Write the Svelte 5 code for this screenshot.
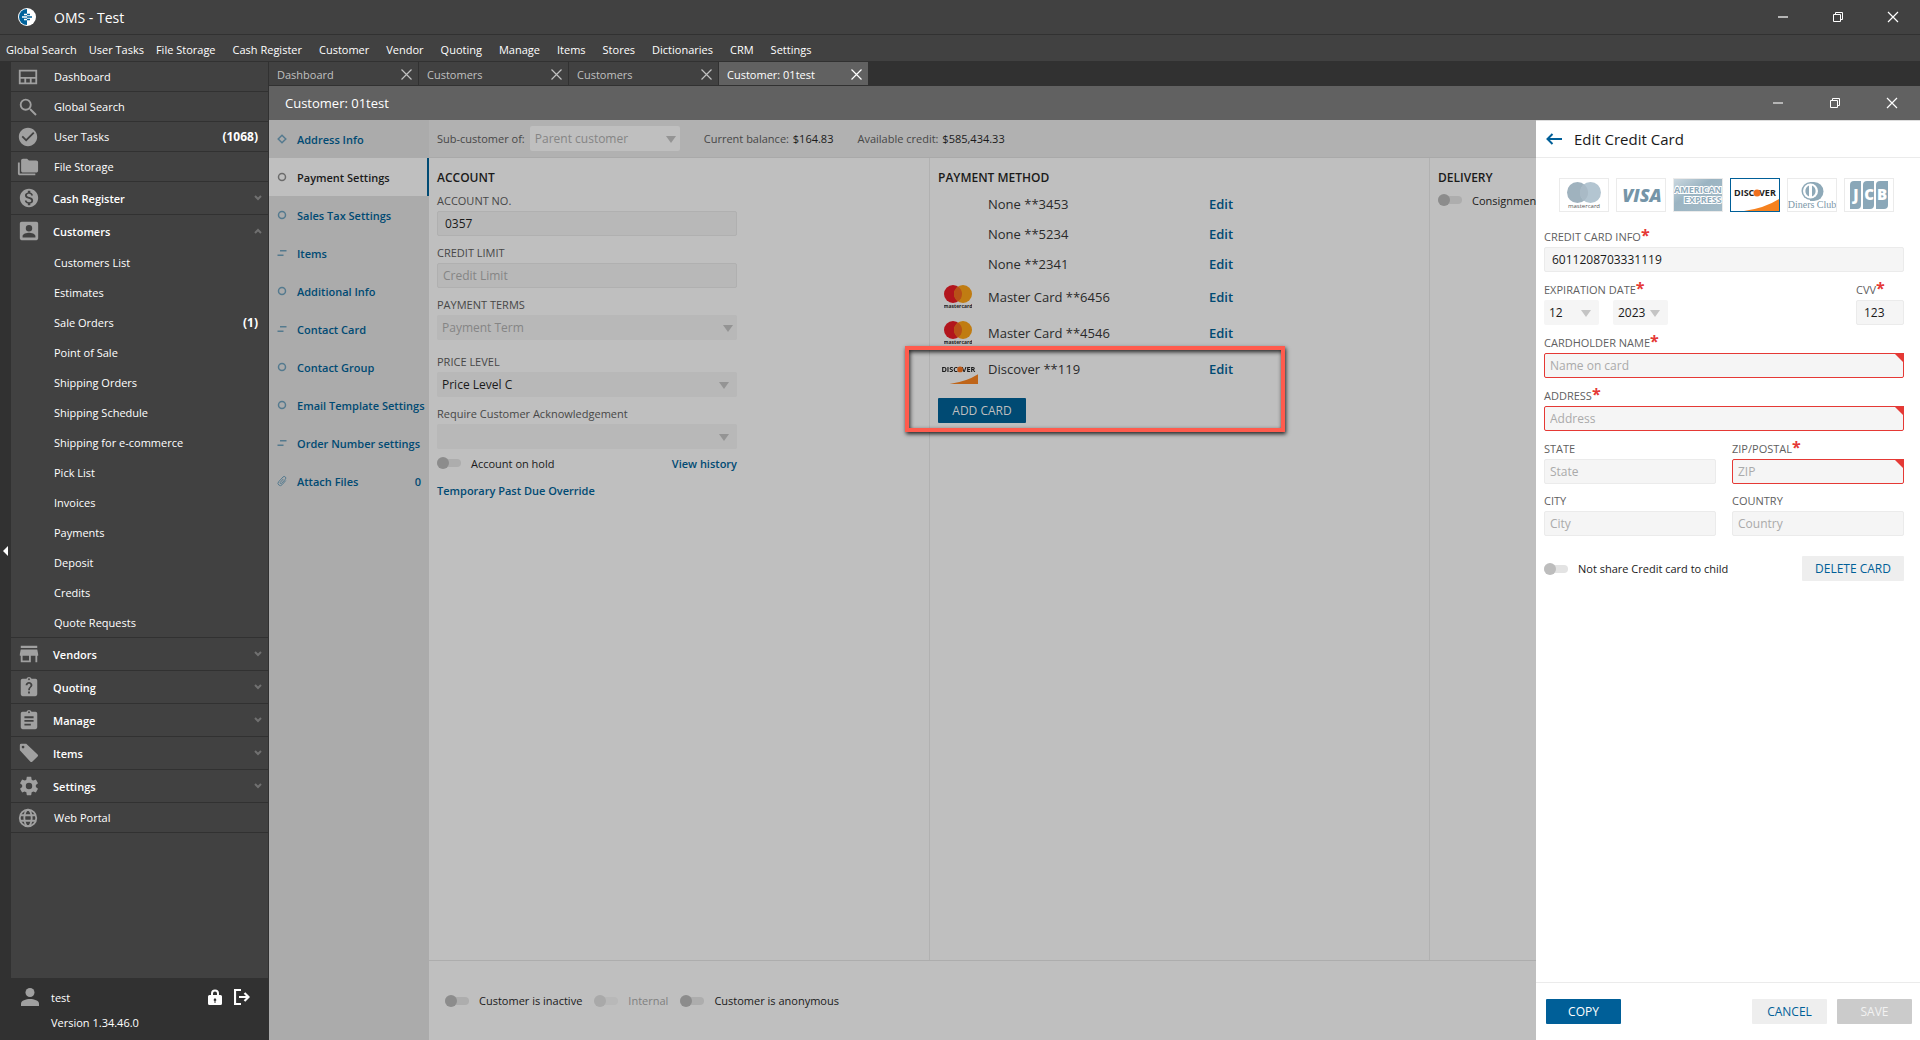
<script lang="ts">
	type NavItem = { label: string; icon: string; group?: boolean; open?: boolean; count?: string; children?: { label: string; count?: string }[] };

	const menu = ['Global Search', 'User Tasks', 'File Storage', 'Cash Register', 'Customer', 'Vendor', 'Quoting', 'Manage', 'Items', 'Stores', 'Dictionaries', 'CRM', 'Settings'];

	const nav: NavItem[] = [
		{ label: 'Dashboard', icon: 'dashboard' },
		{ label: 'Global Search', icon: 'search' },
		{ label: 'User Tasks', icon: 'check', count: '(1068)' },
		{ label: 'File Storage', icon: 'folders' },
		{ label: 'Cash Register', icon: 'dollar', group: true },
		{
			label: 'Customers',
			icon: 'contact',
			group: true,
			open: true,
			children: [
				{ label: 'Customers List' },
				{ label: 'Estimates' },
				{ label: 'Sale Orders', count: '(1)' },
				{ label: 'Point of Sale' },
				{ label: 'Shipping Orders' },
				{ label: 'Shipping Schedule' },
				{ label: 'Shipping for e-commerce' },
				{ label: 'Pick List' },
				{ label: 'Invoices' },
				{ label: 'Payments' },
				{ label: 'Deposit' },
				{ label: 'Credits' },
				{ label: 'Quote Requests' }
			]
		},
		{ label: 'Vendors', icon: 'store', group: true },
		{ label: 'Quoting', icon: 'question', group: true },
		{ label: 'Manage', icon: 'clipboard', group: true },
		{ label: 'Items', icon: 'tag', group: true },
		{ label: 'Settings', icon: 'gear', group: true },
		{ label: 'Web Portal', icon: 'globe' }
	];

	const icons: Record<string, string> = {
		dashboard: 'M2 4h20v16H2zM4 6v6h16V6zM4 14v4h4v-4zM10 14v4h4v-4zM16 14v4h4v-4z',
		search: 'M15.5 14h-.79l-.28-.27A6.47 6.47 0 0 0 16 9.5 6.5 6.5 0 1 0 9.5 16c1.61 0 3.09-.59 4.23-1.57l.27.28v.79l6 5.99L21.49 20zm-6 0C7 14 5 12 5 9.500S7 5 9.500 5 14 7 14 9.500 12 14 9.500 14z',
		check: 'M12 2C6.480 2 2 6.480 2 12s4.480 10 10 10 10-4.480 10-10S17.520 2 12 2zm-2 15l-5-5 1.410-1.410L10 14.170l7.590-7.590L19 8z',
		folders: 'M21 5h-8l-2-2H6.500C5.400 3 4.500 3.900 4.500 5v11c0 1.100.9 2 2 2H21c1.100 0 2-.9 2-2V7c0-1.100-.9-2-2-2zM3 7H1v12c0 1.100.9 2 2 2h17v-2H3z',
		dollar: 'M12 2C6.480 2 2 6.480 2 12s4.480 10 10 10 10-4.480 10-10S17.520 2 12 2zm1.410 16.090V20h-2.670v-1.930c-1.710-.36-3.160-1.460-3.270-3.400h1.960c.1 1.050.82 1.870 2.650 1.870 1.960 0 2.400-.98 2.400-1.590 0-.83-.44-1.610-2.670-2.140-2.480-.6-4.180-1.620-4.180-3.670 0-1.720 1.390-2.840 3.110-3.210V4h2.670v1.950c1.860.45 2.790 1.860 2.850 3.390H14.300c-.05-1.110-.64-1.870-2.220-1.870-1.500 0-2.400.68-2.400 1.640 0 .84.65 1.390 2.670 1.910s4.180 1.390 4.180 3.910c-.01 1.830-1.380 2.830-3.120 3.160z',
		contact: 'M2 4v16c0 1.100.89 2 2 2h16c1.100 0 2-.9 2-2V4c0-1.100-.9-2-2-2H4c-1.110 0-2 .9-2 2zm13.500 5a3.500 3.500 0 1 1-7 0 3.500 3.500 0 0 1 7 0zM5 17.500c0-2.300 4.500-3.600 7-3.600s7 1.300 7 3.600V19H5z',
		store: 'M21 3H3v2.500h18zm1 11v-2l-1-5H3l-1 5v2h1v7h11v-7h5v7h2v-7zm-10 5H5v-5h7z',
		question: 'M19 3h-4.200a3 3 0 0 0-5.600 0H5a2 2 0 0 0-2 2v15a2 2 0 0 0 2 2h14a2 2 0 0 0 2-2V5a2 2 0 0 0-2-2zm-7-.5a1 1 0 1 1 0 2 1 1 0 0 1 0-2zm1 16.500h-2v-2h2zm2-7.200c-1.200 1.200-2 1.700-2 3.700h-2c0-3 2.700-3.800 2.700-5.500 0-.9-.7-1.500-1.700-1.500s-1.700.7-1.700 1.700H8.300C8.300 8 10 6.500 12 6.500S15.700 8 15.700 9.900c0 .8-.2 1.400-.7 1.900z',
		clipboard: 'M19 3h-4.200a3 3 0 0 0-5.600 0H5a2 2 0 0 0-2 2v15a2 2 0 0 0 2 2h14a2 2 0 0 0 2-2V5a2 2 0 0 0-2-2zm-7-.5a1 1 0 1 1 0 2 1 1 0 0 1 0-2zM14 18H7v-2h7zm3-4H7v-2h10zm0-4H7V8h10z',
		tag: 'M2 3.500Q2 2 3.500 2H9L21.400 13.500Q22.500 14.700 21.400 15.800L15.800 21.400Q14.500 22.500 13.300 21.400L2 9zM5.500 4a1.500 1.500 0 1 0 0 3 1.500 1.500 0 0 0 0-3z',
		gear: 'M19.430 12.980c.04-.32.07-.64.07-.98s-.03-.66-.07-.98l2.110-1.650c.19-.15.24-.42.12-.64l-2-3.460c-.12-.22-.39-.3-.61-.22l-2.490 1c-.52-.4-1.080-.73-1.690-.98l-.38-2.650C14.460 2.180 14.250 2 14 2h-4c-.25 0-.46.18-.49.42l-.38 2.650c-.61.25-1.170.59-1.690.98l-2.490-1c-.23-.09-.49 0-.61.22l-2 3.460c-.13.22-.07.49.12.64l2.110 1.650c-.04.32-.07.65-.07.98s.03.66.07.98l-2.110 1.650c-.19.15-.24.42-.12.64l2 3.460c.12.22.39.3.61.22l2.490-1c.52.4 1.080.73 1.690.98l.38 2.650c.03.24.24.42.49.42h4c.25 0 .46-.18.49-.42l.38-2.650c.61-.25 1.170-.59 1.690-.98l2.490 1c.23.09.49 0 .61-.22l2-3.460c.12-.22.07-.49-.12-.64zM12 15.500a3.500 3.500 0 1 1 0-7 3.500 3.500 0 0 1 0 7z'
	};

	const tabs = ['Dashboard', 'Customers', 'Customers', 'Customer: 01test'];

	const sections = [
		{ label: 'Address Info', mark: 'diamond' },
		{ label: 'Payment Settings', mark: 'ring' },
		{ label: 'Sales Tax Settings', mark: 'ring' },
		{ label: 'Items', mark: 'lines' },
		{ label: 'Additional Info', mark: 'ring' },
		{ label: 'Contact Card', mark: 'lines' },
		{ label: 'Contact Group', mark: 'ring' },
		{ label: 'Email Template Settings', mark: 'ring' },
		{ label: 'Order Number settings', mark: 'lines' },
		{ label: 'Attach Files', mark: 'clip', count: '0' }
	];

	const cards = [
		{ label: 'None **3453', brand: '' },
		{ label: 'None **5234', brand: '' },
		{ label: 'None **2341', brand: '' },
		{ label: 'Master Card **6456', brand: 'mastercard' },
		{ label: 'Master Card **4546', brand: 'mastercard' }
	];

	const brands = ['mastercard', 'visa', 'amex', 'discover', 'diners', 'jcb'];

	let activeTab = $state(3);
	let activeSection = $state('Payment Settings');
	let activeBrand = $state('discover');
	let cardNumber = $state('6011208703331119');
	let cvv = $state('123');
	let accountNo = $state('0357');
</script>

{#snippet windowButtons()}
	<div class="window-buttons">
		<button aria-label="Minimize"><svg width="12" height="12" viewBox="0 0 12 12"><path d="M1 6h10" stroke="#b5b5b5" stroke-width="2" /></svg></button>
		<button aria-label="Restore"><svg width="12" height="12" viewBox="0 0 12 12"><path d="M1.500 3.500h7v7h-7zM3.500 3V1.500h7v7H9" fill="none" stroke="#fff" /></svg></button>
		<button aria-label="Close"><svg width="12" height="12" viewBox="0 0 12 12"><path d="M1 1l10 10M11 1L1 11" stroke="#fff" stroke-width="1.200" /></svg></button>
	</div>
{/snippet}

{#snippet discoverLogo()}
	<svg width="48" height="32" viewBox="0 0 48 32" aria-hidden="true">
		<path d="M13 32Q34 29 48 20V32z" fill="#f58220" />
		<text x="3" y="17" font-size="9" font-weight="700" fill="#222">DISC</text>
		<text x="28" y="17" font-size="9" font-weight="700" fill="#222">VER</text>
		<circle cx="26" cy="14" r="3.500" fill="#f0701e" />
	</svg>
{/snippet}

<div class="app">
	<header class="title-bar">
		<svg class="logo" width="18" height="18" viewBox="0 0 18 18" aria-hidden="true">
			<circle cx="9" cy="9" r="9" fill="#fff" />
			<path d="M9 1a8 8 0 0 0 0 16z" fill="#00629b" />
			<path d="M6 6.500h3M4 9h5M6 11.500h3" stroke="#fff" stroke-width="1.300" />
			<path d="M9 6.500h3M9 9h5M9 11.500h3" stroke="#00629b" stroke-width="1.300" />
		</svg>
		<span class="app-name">OMS - Test</span>
		{@render windowButtons()}
	</header>

	<nav class="menu-bar">
		{#each menu as item}
			<button>{item}</button>
		{/each}
	</nav>

	<div class="workspace">
		<button class="collapse" aria-label="Collapse sidebar">
			<svg width="5" height="10" viewBox="0 0 5 10"><path d="M5 0v10L0 5z" fill="#fff" /></svg>
		</button>

		<aside class="sidebar">
			<nav class="side-nav">
				{#each nav as item}
					<button class="nav-row" class:group={item.group} class:open={item.open}>
						<svg class="nav-icon" width="22" height="22" viewBox="0 0 24 24" aria-hidden="true">
							{#if item.icon === 'globe'}
								<g fill="none" stroke="#a0a0a0" stroke-width="2">
									<circle cx="12" cy="12" r="9" />
									<ellipse cx="12" cy="12" rx="4" ry="9" />
									<path d="M4 9h16M4 15h16" />
								</g>
							{:else}
								<path d={icons[item.icon]} fill="#a0a0a0" fill-rule="evenodd" />
							{/if}
						</svg>
						<span class="nav-label">{item.label}</span>
						{#if item.count}<b class="nav-count">{item.count}</b>{/if}
						{#if item.group}
							<svg class="chevron" width="8" height="6" viewBox="0 0 8 6" aria-hidden="true">
								<path d={item.open ? 'M1 5l3-3 3 3' : 'M1 1l3 3 3-3'} fill="none" stroke="#707070" stroke-width="2" />
							</svg>
						{/if}
					</button>
					{#if item.children}
						<div class="nav-children">
							{#each item.children as child}
								<button class="child-row">
									<span class="nav-label">{child.label}</span>
									{#if child.count}<b class="nav-count">{child.count}</b>{/if}
								</button>
							{/each}
						</div>
					{/if}
				{/each}
			</nav>
			<div class="user-box">
				<div class="user-row">
					<svg width="18" height="18" viewBox="0 0 18 18" aria-hidden="true"><circle cx="9" cy="4.500" r="4.500" fill="#a0a0a0" /><path d="M0 18v-2.500C0 12.500 5 11 9 11s9 1.500 9 4.500V18z" fill="#a0a0a0" /></svg>
					<span class="user-name">test</span>
					<button aria-label="Lock">
						<svg width="14" height="16" viewBox="0 0 14 16"><path d="M1.500 6H3V4.500a4 4 0 0 1 8 0V6h1.500A1.500 1.500 0 0 1 14 7.500v7a1.500 1.500 0 0 1-1.500 1.500h-11A1.500 1.500 0 0 1 0 14.500v-7A1.500 1.500 0 0 1 1.500 6zM5 6h4V4.500a2 2 0 0 0-4 0zm1.500 6v2h1v-2a1.300 1.300 0 1 0-1 0z" fill="#fff" fill-rule="evenodd" /></svg>
					</button>
					<button aria-label="Log out">
						<svg width="16" height="16" viewBox="0 0 16 16"><path d="M7 1H1v14h6M5 8h9M10.500 4l4 4-4 4" fill="none" stroke="#fff" stroke-width="2.200" /></svg>
					</button>
				</div>
				<div class="version">Version 1.34.46.0</div>
			</div>
		</aside>

		<main class="main">
			<div class="tabs">
				{#each tabs as tab, i}
					<div class="tab" class:active={activeTab === i}>
						<button class="tab-name" onclick={() => (activeTab = i)}>{tab}</button>
						<button class="tab-close" aria-label="Close {tab}">
							<svg width="11" height="11" viewBox="0 0 11 11"><path d="M.5.5l10 10M10.500.5l-10 10" stroke="currentColor" stroke-width="1.200" /></svg>
						</button>
					</div>
				{/each}
			</div>

			<div class="window-head">
				<h1>Customer: 01test</h1>
				{@render windowButtons()}
			</div>

			<div class="window-body">
				<nav class="section-nav">
					{#each sections as section}
						<button class="section" class:active={activeSection === section.label} onclick={() => (activeSection = section.label)}>
							<svg width="10" height="12" viewBox="0 0 10 12" fill="none" stroke="currentColor" stroke-width="1.500" aria-hidden="true">
								{#if section.mark === 'diamond'}
									<path d="M5 2.200L8.800 6 5 9.800 1.200 6z" />
								{:else if section.mark === 'ring'}
									<circle cx="5" cy="6" r="3.500" />
								{:else if section.mark === 'lines'}
									<path d="M3 3.800h6.500M.5 8.200h6" />
								{:else}
									<path d="M8.800 5.500L5 9.800A2.200 2.200 0 0 1 1.600 6.800L6 2A1.600 1.600 0 0 1 8.400 4.200L4.500 8.400A.8.8 0 0 1 3.300 7.300L6.300 4" stroke-width="1" />
								{/if}
							</svg>
							<span>{section.label}</span>
							{#if section.count}<span class="section-count">{section.count}</span>{/if}
						</button>
					{/each}
				</nav>

				<div class="content">
					<div class="summary">
						<label for="parent">Sub-customer of:</label>
						<div class="select light unset">
							<select id="parent"><option>Parent customer</option></select>
						</div>
						<span class="amount">Current balance: <b>$164.83</b></span>
						<span class="amount">Available credit: <b>$585,434.33</b></span>
					</div>

					<div class="columns">
						<section class="column">
							<h2>ACCOUNT</h2>
							<div class="account-form">
								<div class="field">
									<label for="account-no">ACCOUNT NO.</label>
									<input id="account-no" type="text" bind:value={accountNo} />
								</div>
								<div class="field">
									<label for="credit-limit">CREDIT LIMIT</label>
									<input id="credit-limit" type="text" placeholder="Credit Limit" />
								</div>
								<div class="field spaced">
									<label for="terms">PAYMENT TERMS</label>
									<div class="select unset"><select id="terms"><option>Payment Term</option></select></div>
								</div>
								<div class="field">
									<label for="price-level">PRICE LEVEL</label>
									<div class="select"><select id="price-level"><option>Price Level C</option></select></div>
								</div>
								<div class="field">
									<label for="ack">Require Customer Acknowledgement</label>
									<div class="select"><select id="ack"><option value=""></option></select></div>
								</div>
								<div class="hold-row">
									<label class="toggle"><input type="checkbox" />Account on hold</label>
									<a href="#history">View history</a>
								</div>
								<a class="override" href="#override">Temporary Past Due Override</a>
							</div>
						</section>

						<section class="column">
							<h2>PAYMENT METHOD</h2>
							<div class="card-list">
								{#each cards as card}
									<div class="card-row" class:tall={card.brand}>
										<div class="card-logo">
											{#if card.brand}
												<svg width="28" height="24" viewBox="0 0 28 24" aria-hidden="true">
													<circle cx="9" cy="9" r="9" fill="#b2151d" />
													<circle cx="19" cy="9" r="9" fill="#c07c12" />
													<path d="M14 1.500a9 9 0 0 1 0 15 9 9 0 0 1 0-15z" fill="#b85018" />
													<text x="14" y="23" text-anchor="middle" font-size="5" font-weight="700" fill="#222">mastercard</text>
												</svg>
											{/if}
										</div>
										<span class="card-name">{card.label}</span>
										<a href="#edit">Edit</a>
									</div>
								{/each}
								<div class="highlighted">
									<div class="card-row tall">
										<div class="card-logo discover">{@render discoverLogo()}</div>
										<span class="card-name">Discover **119</span>
										<a href="#edit">Edit</a>
									</div>
									<button class="btn dim-primary">ADD CARD</button>
									<div class="highlight"></div>
								</div>
							</div>
						</section>

						<section class="column">
							<h2>DELIVERY</h2>
							<label class="toggle"><input type="checkbox" />Consignment</label>
						</section>
					</div>

					<footer class="status">
						<label class="toggle"><input type="checkbox" />Customer is inactive</label>
						<label class="toggle off"><input type="checkbox" disabled />Internal</label>
						<label class="toggle"><input type="checkbox" />Customer is anonymous</label>
					</footer>
				</div>

				<form class="panel">
					<div class="panel-head">
						<button type="button" class="back" aria-label="Back">
							<svg width="16" height="12" viewBox="0 0 16 12"><path d="M16 6H2M6.500 1L1.500 6l5 5" fill="none" stroke="#005f98" stroke-width="2" /></svg>
						</button>
						<h2>Edit Credit Card</h2>
					</div>

					<div class="panel-body">
						<div class="brands">
							{#each brands as brand}
								<button type="button" class="brand" class:selected={activeBrand === brand} aria-label={brand} onclick={() => (activeBrand = brand)}>
									{#if brand === 'discover'}
										{@render discoverLogo()}
									{:else}
										<svg width="48" height="32" viewBox="0 0 48 32" aria-hidden="true">
											{#if brand === 'mastercard'}
												<circle cx="17.500" cy="13.500" r="10.500" fill="#9fb2be" />
												<circle cx="30.500" cy="13.500" r="10.500" fill="#b3c5d1" />
												<path d="M24 5.200a10.500 10.500 0 0 1 0 16.600 10.500 10.500 0 0 1 0-16.600z" fill="#a9bac6" />
												<text x="24" y="29" text-anchor="middle" font-size="6" fill="#555">mastercard</text>
											{:else if brand === 'visa'}
												<text x="25" y="23" text-anchor="middle" font-size="18" font-weight="800" font-style="italic" fill="#7595a8">VISA</text>
											{:else if brand === 'amex'}
												<defs>
													<linearGradient id="amex" x1="0" y1="0" x2="1" y2="1">
														<stop offset="0" stop-color="#cbd8e0" />
														<stop offset=".4" stop-color="#9bb4c2" />
														<stop offset="1" stop-color="#a5bcc8" />
													</linearGradient>
												</defs>
												<rect width="48" height="32" fill="url(#amex)" />
												<g font-size="9" font-weight="700" fill="#8fabbb" stroke="#fff" stroke-width="2" paint-order="stroke">
													<text x="0" y="14">AMERICAN</text>
													<text x="10" y="24">EXPRESS</text>
												</g>
											{:else if brand === 'diners'}
												<path d="M22 3h4a9.500 9.500 0 0 1 0 19h-4z" fill="#8ea9b8" />
												<circle cx="22.500" cy="12" r="9" fill="#8ea9b8" />
												<circle cx="22.500" cy="12" r="7.500" fill="#fff" />
												<path d="M21 6.500a6 6 0 0 0 0 11zM24 6.500a6 6 0 0 1 0 11z" fill="#8ea9b8" />
												<text class="serif" x="24" y="29" text-anchor="middle" font-size="10" fill="#7b98a8">Diners Club</text>
											{:else}
												<path d="M9 2h7v24a4 4 0 0 1-4 4H5V6a4 4 0 0 1 4-4z" fill="#8aa7b8" />
												<path d="M22 2h7v24a4 4 0 0 1-4 4h-7V6a4 4 0 0 1 4-4z" fill="#8aa7b8" />
												<path d="M35 2h8v24a4 4 0 0 1-4 4h-8V6a4 4 0 0 1 4-4z" fill="#8aa7b8" />
												<g font-size="15" font-weight="800" fill="#fff" text-anchor="middle">
													<text x="11" y="21">J</text>
													<text x="24" y="21">C</text>
													<text x="37" y="21">B</text>
												</g>
											{/if}
										</svg>
									{/if}
								</button>
							{/each}
						</div>

						<div class="field">
							<label for="card-number">CREDIT CARD INFO<i>*</i></label>
							<input id="card-number" type="text" bind:value={cardNumber} />
						</div>
						<div class="field-row">
							<div class="field">
								<label for="exp-month">EXPIRATION DATE<i>*</i></label>
								<div class="expiry">
									<div class="select"><select id="exp-month"><option>12</option></select></div>
									<div class="select"><select aria-label="Expiration year"><option>2023</option></select></div>
								</div>
							</div>
							<div class="field cvv">
								<label for="cvv">CVV<i>*</i></label>
								<input id="cvv" type="text" bind:value={cvv} />
							</div>
						</div>
						<div class="field invalid">
							<label for="holder">CARDHOLDER NAME<i>*</i></label>
							<div class="box"><input id="holder" type="text" placeholder="Name on card" /></div>
						</div>
						<div class="field invalid">
							<label for="address">ADDRESS<i>*</i></label>
							<div class="box"><input id="address" type="text" placeholder="Address" /></div>
						</div>
						<div class="pair">
							<div class="field">
								<label for="state">STATE</label>
								<input id="state" type="text" placeholder="State" />
							</div>
							<div class="field invalid">
								<label for="zip">ZIP/POSTAL<i>*</i></label>
								<div class="box"><input id="zip" type="text" placeholder="ZIP" /></div>
							</div>
							<div class="field">
								<label for="city">CITY</label>
								<input id="city" type="text" placeholder="City" />
							</div>
							<div class="field">
								<label for="country">COUNTRY</label>
								<input id="country" type="text" placeholder="Country" />
							</div>
						</div>
						<div class="share-row">
							<label class="toggle"><input type="checkbox" />Not share Credit card to child</label>
							<button type="button" class="btn delete">DELETE CARD</button>
						</div>
					</div>

					<div class="panel-foot">
						<button type="button" class="btn primary">COPY</button>
						<button type="button" class="btn">CANCEL</button>
						<button type="button" class="btn" disabled>SAVE</button>
					</div>
				</form>
			</div>
		</main>
	</div>
</div>

<style>
	:global(body) {
		background: #414141;
	}

	.app {
		--input-bg: #b8b8b8;
		--input-line: #b0b0b0;
		--link: #004a73;
		--label: #474747;
		--text: #1a1a1a;
		--hint: #858585;
		--track: #adadad;
		--knob: #8c8c8c;
		--arrow: #949494;
		display: flex;
		flex-direction: column;
		height: 100vh;
		overflow: hidden;
		font-family: 'Segoe UI', 'Open Sans', 'Noto Sans', sans-serif;
		font-size: 12px;
		color: #fff;
	}

	.app :global(*) {
		box-sizing: border-box;
	}

	button,
	input,
	select {
		font: inherit;
		color: inherit;
		margin: 0;
	}

	button {
		padding: 0;
		border: 0;
		background: none;
		cursor: pointer;
	}

	svg {
		display: block;
	}

	h1,
	h2 {
		margin: 0;
		font-weight: 400;
	}

	a {
		color: var(--link);
		font-weight: 600;
		text-decoration: none;
	}

	.title-bar {
		display: flex;
		align-items: center;
		height: 35px;
		padding-left: 18px;
		background: #414141;
		border-bottom: 1px solid #313131;
	}

	.app-name {
		margin-left: 18px;
		font-size: 14px;
	}

	.window-buttons {
		display: flex;
		margin-left: auto;
	}

	.window-buttons button {
		display: grid;
		place-items: center;
		width: 55px;
		height: 34px;
	}

	.menu-bar {
		display: flex;
		gap: 17px;
		height: 26px;
		padding: 4px 0 0 6px;
		background: #414141;
		font-size: 11px;
	}

	.menu-bar button {
		line-height: 22px;
	}

	.menu-bar button:nth-child(-n + 2) {
		margin-right: -5px;
	}

	.workspace {
		display: flex;
		flex: 1;
		min-height: 0;
		border-top: 1px solid #313131;
	}

	.collapse {
		display: flex;
		align-items: center;
		justify-content: center;
		width: 11px;
		background: #313131;
	}

	.sidebar {
		display: flex;
		flex-direction: column;
		width: 258px;
		border-right: 1px solid #313131;
		background: #414141;
		font-size: 11px;
	}

	.side-nav {
		flex: 1;
	}

	.nav-row {
		display: flex;
		align-items: center;
		width: 100%;
		height: 30px;
		padding: 0 10px 0 6px;
		border-bottom: 1px solid #313131;
		text-align: left;
	}

	.nav-row.group {
		height: 33px;
		padding: 0 6px 0 7px;
		font-weight: 600;
	}

	.nav-row.group.open {
		height: 32px;
		border-bottom: 0;
	}

	.nav-label {
		flex: 1;
		margin-left: 15px;
	}

	.nav-row.group .nav-label {
		margin-left: 13px;
	}

	.nav-count {
		font-size: 12px;
	}

	.nav-children {
		border-bottom: 1px solid #313131;
	}

	.child-row {
		display: flex;
		align-items: center;
		width: 100%;
		height: 30px;
		padding: 0 10px 0 28px;
		text-align: left;
	}

	.user-box {
		height: 62px;
		padding: 8px 18px 0 10px;
		background: #313131;
	}

	.user-row {
		display: flex;
		align-items: center;
		gap: 12px;
		height: 22px;
	}

	.user-name {
		flex: 1;
	}

	.version {
		padding-left: 30px;
		line-height: 30px;
	}

	.main {
		display: flex;
		flex-direction: column;
		flex: 1;
		min-width: 0;
	}

	.tabs {
		display: flex;
		gap: 1px;
		height: 24px;
		padding-bottom: 1px;
		background: #313131;
		font-size: 11px;
		color: #c0c0c0;
	}

	.tab {
		display: flex;
		align-items: center;
		width: 149px;
		padding: 1px 6px 0 8px;
		background: #414141;
	}

	.tab.active {
		background: #616161;
		color: #fff;
	}

	.tab-name {
		flex: 1;
		text-align: left;
	}

	.window-head {
		display: flex;
		align-items: center;
		height: 34px;
		padding-left: 16px;
		background: #616161;
	}

	.window-head h1 {
		font-size: 13px;
	}

	.window-head .window-buttons button {
		width: 57px;
	}

	.window-body {
		position: relative;
		display: flex;
		flex: 1;
		min-height: 0;
		background: #bfbfbf;
		color: var(--text);
	}

	.section-nav {
		width: 160px;
		background: #ababab;
		font-size: 11px;
	}

	.section {
		display: flex;
		align-items: center;
		gap: 10px;
		width: 100%;
		height: 38px;
		padding: 0 6px 0 8px;
		border-right: 2px solid transparent;
		color: var(--link);
		font-weight: 600;
		white-space: nowrap;
	}

	.section svg {
		flex: none;
		opacity: 0.5;
	}

	.section.active {
		background: #bfbfbf;
		border-right-color: var(--link);
		color: var(--text);
	}

	.section-count {
		margin-left: auto;
	}

	.content {
		display: flex;
		flex-direction: column;
		flex: 1;
		min-width: 0;
		overflow: hidden;
	}

	.summary {
		display: flex;
		align-items: center;
		height: 38px;
		padding-left: 8px;
		background: #b1b1b1;
		border-bottom: 1px solid #a9a9a9;
		color: var(--label);
		font-size: 11px;
	}

	.summary .select {
		width: 150px;
		margin-left: 5px;
	}

	.amount {
		margin-left: 24px;
	}

	.amount b {
		margin-left: 1px;
		color: var(--text);
		font-weight: 400;
	}

	.columns {
		display: flex;
		flex: 1;
	}

	.column {
		flex: 0 0 500px;
		padding: 7px 8px 0;
		border-right: 1px solid #b1b1b1;
	}

	.column:first-child {
		flex-basis: 501px;
	}

	.column h2 {
		font-size: 12px;
		font-weight: 600;
		line-height: 26px;
	}

	.account-form {
		width: 300px;
	}

	.field {
		margin-bottom: 7px;
	}

	.field.spaced {
		margin-bottom: 12px;
	}

	.field > label {
		display: block;
		height: 20px;
		line-height: 20px;
		font-size: 11px;
		color: var(--label);
	}

	.field i {
		color: #e53935;
		font-size: 16px;
		font-style: normal;
		font-weight: 700;
		line-height: 16px;
	}

	.field input {
		display: block;
		width: 100%;
		height: 25px;
		padding: 0 7px;
		border: 1px solid var(--input-line);
		border-radius: 2px;
		background: var(--input-bg);
		outline: none;
	}

	.field input::placeholder {
		color: var(--hint);
	}

	.field input:placeholder-shown {
		padding-left: 5px;
	}

	.select {
		position: relative;
	}

	.select::after {
		content: '';
		position: absolute;
		right: 8px;
		top: 10px;
		border: 5px solid transparent;
		border-top: 7px solid var(--arrow);
		border-bottom: 0;
		pointer-events: none;
	}

	.select select {
		display: block;
		appearance: none;
		width: 100%;
		height: 25px;
		padding: 0 5px;
		border: 0;
		border-radius: 2px;
		background: var(--input-bg);
	}

	.select.light select {
		background: #bfbfbf;
	}

	.select.unset select {
		color: var(--hint);
	}

	.select.unset::after {
		right: 4px;
	}

	.summary select {
		font-size: 12px;
	}

	.hold-row {
		display: flex;
		align-items: center;
		justify-content: space-between;
		height: 28px;
		margin-top: -7px;
	}

	.hold-row a,
	.override {
		font-size: 11px;
	}

	.override {
		line-height: 28px;
	}

	.toggle {
		display: inline-flex;
		align-items: center;
		gap: 10px;
		white-space: nowrap;
		font-size: 11px;
	}

	.toggle input {
		position: relative;
		appearance: none;
		width: 24px;
		height: 8px;
		border-radius: 4px;
		background: var(--track);
	}

	.toggle input::before {
		content: '';
		position: absolute;
		left: 0;
		top: -2px;
		width: 12px;
		height: 12px;
		border-radius: 50%;
		background: var(--knob);
	}

	.toggle.off {
		--track: #b8b8b8;
		--knob: #a9a9a9;
		color: #808080;
	}

	.card-list {
		margin-top: -2px;
	}

	.card-row {
		display: flex;
		align-items: center;
		height: 30px;
	}

	.card-row.tall {
		height: 36px;
	}

	.card-logo {
		display: flex;
		width: 50px;
		padding-left: 6px;
	}

	.card-logo.discover {
		padding: 4px 0 0 1px;
		filter: brightness(0.78);
	}

	.card-logo.discover :global(svg) {
		width: 39px;
		height: 26px;
	}

	.card-name {
		width: 221px;
		font-size: 13px;
		color: #2a2a2a;
	}

	.card-row a {
		font-size: 13px;
	}

	.highlighted {
		position: relative;
		padding-bottom: 9px;
	}

	.highlight {
		position: absolute;
		left: -33px;
		top: -5px;
		bottom: 0;
		width: 380px;
		border: 4px solid #ff5b4d;
		box-shadow: 1px 2px 4px #000000d0, inset 1px 2px 4px #000000d0;
		pointer-events: none;
	}

	.btn {
		width: 75px;
		height: 25px;
		border-radius: 1px;
		background: #eee;
		color: #005f98;
		font-size: 12px;
	}

	.dim-primary {
		display: block;
		width: 88px;
		margin-top: 11px;
		background: #004a73;
		color: #bfbfbf;
	}

	.primary {
		background: #005f98;
		color: #fff;
	}

	.btn:disabled {
		background: #cbcbcb;
		color: #f2f2f2;
	}

	.status {
		display: flex;
		align-items: center;
		gap: 12px;
		height: 80px;
		padding-left: 16px;
		border-top: 1px solid #adadad;
	}

	/* card editor, slides over the right edge of the window */
	.panel {
		--input-bg: #f5f5f5;
		--input-line: #ebebeb;
		--link: #005f98;
		--label: #5f5f5f;
		--hint: #aaa;
		--track: #e3e3e3;
		--knob: #bdbdbd;
		--arrow: #c4c4c4;
		position: absolute;
		top: 0;
		right: 0;
		bottom: 0;
		display: flex;
		flex-direction: column;
		width: 384px;
		border-top: 1px solid #ddd;
		background: #fff;
	}

	.panel-head {
		display: flex;
		align-items: center;
		height: 37px;
		padding-left: 10px;
		border-bottom: 1px solid #ebebeb;
	}

	.panel-head h2 {
		margin-left: 12px;
		font-size: 15px;
	}

	.panel-body {
		flex: 1;
		padding: 20px 16px 0 8px;
	}

	.brands {
		display: flex;
		gap: 7px;
		padding-left: 15px;
		margin-bottom: 14px;
	}

	.brand {
		width: 50px;
		height: 34px;
		border: 1px solid #ebebeb;
		overflow: hidden;
	}

	.brand.selected {
		border-color: #005f98;
	}

	.brand .serif {
		font-family: 'Liberation Serif', serif;
	}

	.panel .field > label {
		height: 21px;
		line-height: 21px;
	}

	.field-row {
		display: flex;
		justify-content: space-between;
	}

	.expiry {
		display: grid;
		grid-template-columns: 55px 55px;
		gap: 14px;
	}

	.cvv {
		width: 48px;
	}

	.box {
		position: relative;
	}

	.box::after {
		content: '';
		position: absolute;
		top: 0;
		right: 0;
		border-top: 10px solid #e53935;
		border-left: 10px solid transparent;
	}

	.panel .invalid input {
		border-color: #e53935;
	}

	.pair {
		display: grid;
		grid-template-columns: 1fr 1fr;
		column-gap: 16px;
	}

	.pair .field {
		margin-bottom: 6px;
	}

	.share-row {
		display: flex;
		align-items: center;
		justify-content: space-between;
		margin-top: 14px;
	}

	.delete {
		width: 102px;
	}

	.panel-foot {
		display: flex;
		gap: 10px;
		height: 58px;
		padding: 16px 8px 0 10px;
		border-top: 1px solid #ebebeb;
	}

	.panel-foot .primary {
		margin-right: auto;
	}
</style>
